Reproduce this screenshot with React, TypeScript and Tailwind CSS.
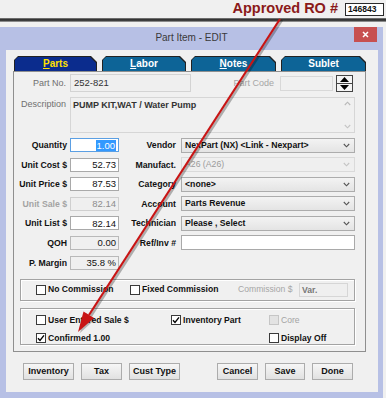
import React from 'react';

const font = "font-['Liberation_Sans',Arial,Helvetica,sans-serif]";

function Check({ checked, disabled }: { checked?: boolean; disabled?: boolean }) {
  return (
    <span
      className={`flex shrink-0 items-center justify-center w-[10px] h-[10px] border ${
        disabled ? 'border-[#c6c6c6] bg-[#e3e3e3]' : 'border-[#3a3a3a] bg-white'
      }`}
    >
      {checked && (
        <svg width="8" height="8" viewBox="0 0 8 8">
          <path d="M1 4.2 L3 6.4 L7 1.4" fill="none" stroke="#000" strokeWidth="1.4" />
        </svg>
      )}
    </span>
  );
}

function Chevron({ light }: { light?: boolean }) {
  return (
    <svg width="7" height="5" viewBox="0 0 7 5" className="shrink-0">
      <path d="M0.8 1 L3.5 3.8 L6.2 1" fill="none" stroke={light ? '#c4c4c4' : '#555'} strokeWidth="1.1" />
    </svg>
  );
}

function Tab({ label, u, rest, active, w }: { label?: string; u: string; rest: string; active?: boolean; w: string }) {
  return (
    <div
      className={`h-[15px] ${w} bg-[#222] pt-[1px] px-[1px] [clip-path:polygon(4px_0,calc(100%_-_6px)_0,100%_6px,100%_100%,0_100%,0_4px)]`}
    >
      <div
        className={`h-full flex items-center justify-center text-[10px] font-bold leading-none [clip-path:polygon(3px_0,calc(100%_-_6px)_0,100%_6px,100%_100%,0_100%,0_3px)] ${
          active ? 'bg-[#0b2c8d] text-[#ffe100]' : 'bg-[#0d6497] text-white'
        }`}
      >
        {label ? label : (
          <span>
            <span className="underline underline-offset-[1px]">{u}</span>
            {rest}
          </span>
        )}
      </div>
    </div>
  );
}

function Btn({ label, w }: { label: string; w: string }) {
  return (
    <div
      className={`${w} h-[17px] flex items-center justify-center border border-[#acacac] bg-gradient-to-b from-[#f6f6f6] to-[#e1e1e1] text-[9px] font-bold text-[#111] leading-none`}
    >
      {label}
    </div>
  );
}

type Left = { label: string; value: string; kind?: 'focus' | 'disabled' | 'readonly' };
type Right = { label: string; value?: string; kind: 'select' | 'disabled' | 'input' } | null;

const left: Left[] = [
  { label: 'Quantity', value: '1.00', kind: 'focus' },
  { label: 'Unit Cost $', value: '52.73' },
  { label: 'Unit Price $', value: '87.53' },
  { label: 'Unit Sale $', value: '82.14', kind: 'disabled' },
  { label: 'Unit List $', value: '82.14' },
  { label: 'QOH', value: '0.00', kind: 'readonly' },
  { label: 'P. Margin', value: '35.8 %', kind: 'readonly' },
];

const right: Right[] = [
  { label: 'Vendor', value: 'NexPart (NX) <Link - Nexpart>', kind: 'select' },
  { label: 'Manufact.', value: 'A26 (A26)', kind: 'disabled' },
  { label: 'Category', value: '<none>', kind: 'select' },
  { label: 'Account', value: 'Parts Revenue', kind: 'select' },
  { label: 'Technician', value: 'Please , Select', kind: 'select' },
  { label: 'Ref/Inv #', kind: 'input' },
  null,
];

function LeftField({ f }: { f: Left }) {
  const box =
    f.kind === 'focus'
      ? 'bg-white border-[#5b9fe3]'
      : f.kind === 'disabled'
      ? 'bg-[#efefef] border-[#cfcfcf] text-[#8d8d8d]'
      : f.kind === 'readonly'
      ? 'bg-[#f0f0f0] border-[#b9b9b9] text-[#111]'
      : 'bg-white border-[#a9a9a9] text-[#111]';
  return (
    <div className="flex items-center h-[14px]">
      <div
        className={`w-[53px] text-right text-[8.7px] font-bold leading-[14px] whitespace-nowrap ${
          f.kind === 'disabled' ? 'text-[#a3a3a3]' : 'text-[#111]'
        }`}
      >
        {f.label}
      </div>
      <div className={`ml-[3px] w-[49px] h-[14px] border ${box} flex items-center justify-end pr-[2px] text-[9.5px] leading-none`}>
        {f.kind === 'focus' ? (
          <span className="bg-[#3399ff] text-white px-[1px] leading-[11px]">{f.value}</span>
        ) : (
          f.value
        )}
      </div>
    </div>
  );
}

function RightField({ f }: { f: Right }) {
  if (!f) return <div className="h-[14px]" />;
  return (
    <div className="flex items-center h-[14px]">
      <div className="w-[57px] text-right text-[8.7px] font-bold leading-[14px] text-[#111] whitespace-nowrap">{f.label}</div>
      {f.kind === 'input' ? (
        <div className="ml-[5px] w-[174px] h-[15px] bg-white border border-[#a9a9a9]" />
      ) : (
        <div
          className={`ml-[5px] w-[174px] h-[15px] border flex items-center pl-[3px] pr-[4px] text-[8.7px] font-bold leading-none ${
            f.kind === 'disabled'
              ? 'border-[#dadada] bg-[#efefef] text-[#9b9b9b] font-normal'
              : 'border-[#acacac] bg-gradient-to-b from-[#f3f3f3] to-[#e4e4e4] text-[#111]'
          }`}
        >
          <span className="flex-1 whitespace-nowrap">{f.value}</span>
          <Chevron light={f.kind === 'disabled'} />
        </div>
      )}
    </div>
  );
}

export default function App() {
  return (
    <div className={`relative w-[386px] h-[398px] overflow-hidden bg-[#f0f0f0] ${font}`}>
      {/* top strip */}
      <div className="h-[18px] flex items-start justify-end pr-[2px]">
        <span className="text-[14.5px] font-bold text-[#8b1a1a] leading-[17px] whitespace-nowrap">Approved RO #</span>
        <div className="ml-[7px] mt-[3px] w-[39px] h-[13px] bg-white border border-[#2a2a2a] text-[8.5px] font-bold leading-[11px] pl-[2px] text-[#111]">
          146843
        </div>
      </div>
      <div className="h-[4px] bg-gradient-to-b from-[#8a8a8a] via-[#1c1c1c] to-[#b4b4b4]" />
      <div className="h-[5px]" />

      {/* dialog */}
      <div className="w-[383px] h-[371px] bg-[#b7c0e5] flex flex-col">
        <div className="h-[23px] grid grid-cols-[1fr_auto_1fr]">
          <div />
          <div className="pt-[5px] text-[10px] text-[#3a3a3a] leading-[12px] whitespace-nowrap">Part Item - EDIT</div>
          <div className="flex justify-end pr-[6px]">
            <div className="w-[23px] h-[15px] bg-[#c75050] flex items-center justify-center">
              <svg width="7" height="7" viewBox="0 0 7 7">
                <path d="M1 1 L6 6 M6 1 L1 6" stroke="#fff" strokeWidth="1.5" />
              </svg>
            </div>
          </div>
        </div>

        <div className="ml-[6px] w-[372px] h-[342px] bg-[#f0f0f0] flex flex-col">
          {/* tabs */}
          <div className="mt-[6px] ml-[8px] flex gap-[5px]">
            <Tab u="P" rest="arts" active w="w-[83px]" />
            <Tab u="L" rest="abor" w="w-[84px]" />
            <Tab u="N" rest="otes" w="w-[85px]" />
            <Tab label="Sublet" u="" rest="" w="w-[85px]" />
          </div>

          {/* panel */}
          <div className="ml-[7px] w-[353px] h-[281px] border border-[#8f8f8f] flex flex-col">
            {/* Part No */}
            <div className="mt-[2px] flex items-center h-[18px]">
              <div className="w-[52px] text-right text-[9px] text-[#6f6f6f] leading-none">Part No.</div>
              <div className="ml-[4px] w-[121px] h-[18px] bg-[#efefef] border border-[#d3d3d3] flex items-center pl-[3px] text-[9.5px] text-[#333] leading-none">
                252-821
              </div>
              <div className="flex-1 text-right pr-[6px] text-[9px] text-[#a6a6a6] leading-none">Part Code</div>
              <div className="w-[53px] h-[15px] bg-[#f0f0f0] border border-[#d8d8d8]" />
              <div className="ml-[3px] mr-[12px] w-[17px] h-[17px] border border-[#444] bg-[#f4f4f4] flex flex-col">
                <div className="flex-1 flex items-center justify-center border-b border-[#444]">
                  <svg width="9" height="5" viewBox="0 0 9 5"><path d="M0 5 L4.5 0 L9 5 Z" fill="#000" /></svg>
                </div>
                <div className="flex-1 flex items-center justify-center">
                  <svg width="9" height="5" viewBox="0 0 9 5"><path d="M0 0 L4.5 5 L9 0 Z" fill="#000" /></svg>
                </div>
              </div>
            </div>

            {/* Description */}
            <div className="mt-[5px] flex items-start h-[36px]">
              <div className="w-[52px] pt-[3px] text-right text-[9px] text-[#6f6f6f] leading-none">Description</div>
              <div className="ml-[4px] w-[285px] h-[36px] bg-[#f0f0f0] border border-[#d6d6d6] flex">
                <div className="flex-1 pl-[2px] pt-[3px] text-[9px] font-bold text-[#333] leading-none whitespace-nowrap">
                  PUMP KIT,WAT / Water Pump
                </div>
                <div className="w-[13px] flex flex-col items-center justify-between py-[3px]">
                  <svg width="7" height="5" viewBox="0 0 7 5"><path d="M0.8 4 L3.5 1.2 L6.2 4" fill="none" stroke="#b8b8b8" strokeWidth="1.1" /></svg>
                  <Chevron light />
                </div>
              </div>
            </div>

            {/* field rows */}
            <div className="mt-[5px] flex flex-col gap-[5.6px]">
              {left.map((f, i) => (
                <div key={f.label} className="flex items-center">
                  <LeftField f={f} />
                  <RightField f={right[i]} />
                </div>
              ))}
            </div>

            {/* commission group */}
            <div className="mt-[9px] ml-[6px] w-[335px] h-[22px] border border-[#a3a3a3] shadow-[inset_1px_1px_0_#fff,1px_1px_0_#fff] flex items-center pl-[15px]">
              <div className="w-[94px] flex items-center gap-[2px]">
                <Check />
                <span className="text-[8.6px] font-bold text-[#111] whitespace-nowrap">No Commission</span>
              </div>
              <div className="w-[108px] flex items-center gap-[2px]">
                <Check />
                <span className="text-[8.6px] font-bold text-[#111] whitespace-nowrap">Fixed Commission</span>
              </div>
              <span className="w-[61px] text-[8.6px] text-[#a6a6a6] whitespace-nowrap">Commission $</span>
              <div className="w-[49px] h-[14px] bg-[#efefef] border border-[#d6d6d6] text-[8.6px] font-bold text-[#777] leading-[12px] pl-[2px]">
                Var.
              </div>
            </div>

            {/* flags group */}
            <div className="mt-[7px] ml-[6px] w-[335px] h-[37px] border border-[#a3a3a3] shadow-[inset_1px_1px_0_#fff,1px_1px_0_#fff] pl-[15px] pt-[5px] grid grid-cols-[135px_98px_1fr] gap-y-[6px]">
              <div className="flex items-center gap-[2px]">
                <Check />
                <span className="text-[8.6px] font-bold text-[#111] whitespace-nowrap leading-[10px]">User Entered Sale $</span>
              </div>
              <div className="flex items-center gap-[2px]">
                <Check checked />
                <span className="text-[8.6px] font-bold text-[#111] whitespace-nowrap leading-[10px]">Inventory Part</span>
              </div>
              <div className="flex items-center gap-[2px]">
                <Check disabled />
                <span className="text-[8.6px] text-[#a3a3a3] whitespace-nowrap leading-[10px]">Core</span>
              </div>
              <div className="flex items-center gap-[2px]">
                <Check checked />
                <span className="text-[8.6px] font-bold text-[#111] whitespace-nowrap leading-[10px]">Confirmed 1.00</span>
              </div>
              <div />
              <div className="flex items-center gap-[2px]">
                <Check />
                <span className="text-[8.6px] font-bold text-[#111] whitespace-nowrap leading-[10px]">Display Off</span>
              </div>
            </div>
          </div>

          {/* buttons */}
          <div className="mt-[11px] ml-[17px] w-[330px] flex">
            <div className="flex gap-[7px]">
              <Btn label="Inventory" w="w-[51px]" />
              <Btn label="Tax" w="w-[41px]" />
              <Btn label="Cust Type" w="w-[51px]" />
            </div>
            <div className="ml-auto flex gap-[7px]">
              <Btn label="Cancel" w="w-[41px]" />
              <Btn label="Save" w="w-[40px]" />
              <Btn label="Done" w="w-[41px]" />
            </div>
          </div>
        </div>
      </div>

      {/* red annotation arrow */}
      <svg className="absolute inset-0 pointer-events-none" width="386" height="398" viewBox="0 0 386 398">
        <line x1="282" y1="20" x2="91" y2="316" stroke="rgba(0,0,0,0.28)" strokeWidth="2.5" />
        <polygon points="80,333 95.5,319 85.5,313" fill="rgba(0,0,0,0.25)" />
        <line x1="280" y1="19" x2="89" y2="315" stroke="#c81414" strokeWidth="2.2" />
        <polygon points="78,332 94,318 83.5,311.5" fill="#c81414" />
      </svg>
    </div>
  );
}
